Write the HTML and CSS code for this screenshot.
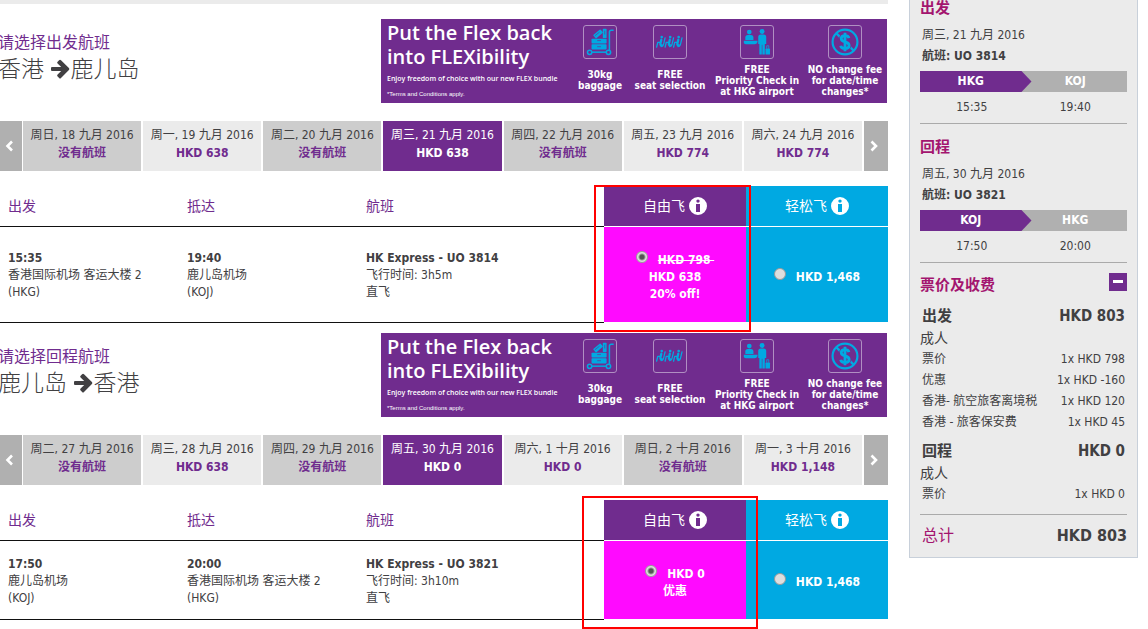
FILE: index.html
```html
<!DOCTYPE html>
<html lang="zh-CN">
<head>
    <meta charset="UTF-8">
    <meta name="viewport" content="width=device-width, initial-scale=1.0">
    <title>HK Express - 选择航班</title>
    <link rel="stylesheet" href="styles.css">
</head>
<body>
    <!-- Shared icons -->
    <svg class="sprite" width="0" height="0" aria-hidden="true">
        <symbol id="icon-arrow" viewBox="0 0 20 20">
            <path d="M1 8h9.200L6.600 4.600a1.300 1.300 0 0 1 0-1.900l1.500-1.500a1.300 1.300 0 0 1 1.900 0l7.900 7.900a1.300 1.300 0 0 1 0 1.900L10 18.900a1.300 1.300 0 0 1-1.900 0l-1.500-1.500a1.300 1.300 0 0 1 0-1.900l3.600-3.400H1a1 1 0 0 1-1-1V9a1 1 0 0 1 1-1z"/>
        </symbol>
        <symbol id="icon-prev" viewBox="0 0 10 12">
            <path d="M7 1.500L2.500 6 7 10.500" fill="none" stroke="#fff" stroke-width="2.600"/>
        </symbol>
        <symbol id="icon-next" viewBox="0 0 10 12">
            <path d="M2.500 1.500L7 6l-4.500 4.500" fill="none" stroke="#fff" stroke-width="2.600"/>
        </symbol>
        <symbol id="icon-info" viewBox="0 0 18 18">
            <path fill-rule="evenodd" d="M9 0a9 9 0 1 1 0 18A9 9 0 0 1 9 0zM9 2.400a1.700 1.700 0 1 0 0 3.400 1.700 1.700 0 0 0 0-3.400zM7 7v8h4V7z"/>
        </symbol>
        <symbol id="icon-baggage" viewBox="0 0 34 34">
            <g fill="#00a9e2">
                <rect x="8" y="19.500" width="16" height="5.500" rx=".8"/>
                <rect x="8" y="13.500" width="16" height="5" rx=".8"/>
                <rect x="20" y="3" width="4" height="9.800" rx=".6"/>
                <rect x="10" y="6" width="10" height="4.800" rx=".8" transform="rotate(-40 15 8.500)"/>
                <rect x="8" y="27" width="16" height="1.600"/>
            </g>
            <g fill="none" stroke="#00a9e2" stroke-width="1.600">
                <circle cx="6" cy="28" r="2.300"/>
                <circle cx="26" cy="28" r="2.300"/>
                <path d="M27 25.500V6.500q0-2 2-2h2.500"/>
            </g>
            <path d="M14 15.500h4M14 22h4M11.500 10.500l5-4M22 5v4" stroke="#702c8e" stroke-width=".7"/>
        </symbol>
        <symbol id="icon-seat" viewBox="0 0 34 34">
            <g id="seat" fill="none" stroke="#00a9e2" stroke-linecap="round" stroke-linejoin="round">
                <circle cx="8.200" cy="11.800" r="1.400" fill="#00a9e2" stroke="none"/>
                <path d="M7.800 14.600l-1 4.200q-.2 1.700 1.600 1.700" stroke-width="2.400"/>
                <path d="M11.800 12.500l-1.600 6.700q-.6 2.600-2.800 2.600" stroke-width="1.300"/>
                <path d="M6.600 17.400H4L2.800 22.500" stroke-width="1.400"/>
            </g>
            <use href="#seat" x="9"/>
            <use href="#seat" x="18"/>
        </symbol>
        <symbol id="icon-checkin" viewBox="0 0 34 34">
            <g fill="#00a9e2">
                <circle cx="8.800" cy="6.500" r="2.500"/>
                <path d="M4.600 14.800v-2.600q0-2.700 2.700-2.700h3.200q2.700 0 2.700 2.700v2.600z"/>
                <path d="M3 15.600h14.500v1.400q-.8 2.400-3 2.400H5.500q-2.200 0-2.500-2z"/>
                <circle cx="22.400" cy="5.800" r="2.600"/>
                <path d="M21 9h3q2.800 0 2.800 2.800V19h-1.500v11.300h-2.600V20h-.6v10.300h-2.600V19h-1.200V11.800Q18.300 9 21 9z"/>
                <rect x="26" y="24" width="4.800" height="6.300" rx=".6"/>
            </g>
            <path d="M27.300 24v-3h2.200v3" fill="none" stroke="#00a9e2" stroke-width=".8"/>
        </symbol>
        <symbol id="icon-nofee" viewBox="0 0 34 34">
            <g fill="none">
                <circle cx="17" cy="17" r="13.200" stroke="#00a9e2" stroke-width="2.300"/>
                <path d="M7.600 7.600l18.800 18.800" stroke="#00a9e2" stroke-width="2.400"/>
                <path d="M21.200 12.800q-.7-2.600-4.200-2.600-4 0-4 3.100 0 2.600 4 3.500 4.400 1 4.400 3.900 0 3.200-4.400 3.200-4 0-4.600-3M17 7.200v19.600" stroke="#702c8e" stroke-width="4.200"/>
                <path d="M21.200 12.800q-.7-2.600-4.200-2.600-4 0-4 3.100 0 2.600 4 3.500 4.400 1 4.400 3.900 0 3.200-4.400 3.200-4 0-4.600-3M17 7.200v19.600" stroke="#00a9e2" stroke-width="3"/>
            </g>
        </symbol>
        <symbol id="icon-minus" viewBox="0 0 18 18">
            <path d="M4 7h10v3H4z" fill="#fff"/>
        </symbol>
    </svg>

    <div class="page">
        <main class="flights">
            <div class="top-bar"></div>

            <section class="leg">
                <div class="leg-header">
                    <div class="leg-title">
                        <h2>请选择出发航班</h2>
                        <h3>香港 <svg class="arrow"><use href="#icon-arrow"/></svg>鹿儿岛</h3>
                    </div>
                    <div class="banner">
                        <div class="banner-text">
                            <p class="banner-title">Put the Flex back<br>into FLEXibility</p>
                            <p class="banner-sub">Enjoy freedom of choice with our new FLEX bundle</p>
                            <p class="banner-terms">*Terms and Conditions apply.</p>
                        </div>
                        <div class="perk"><svg><use href="#icon-baggage"/></svg><p>30kg<br>baggage</p></div>
                        <div class="perk"><svg><use href="#icon-seat"/></svg><p>FREE<br>seat selection</p></div>
                        <div class="perk"><svg><use href="#icon-checkin"/></svg><p>FREE<br>Priority Check in<br>at HKG airport</p></div>
                        <div class="perk"><svg><use href="#icon-nofee"/></svg><p>NO change fee<br>for date/time<br>changes*</p></div>
                    </div>
                </div>

                <div class="dates">
                    <button class="nav prev" aria-label="前一天"><svg><use href="#icon-prev"/></svg></button>
                    <button class="day none">周日, 18 九月 2016<b>没有航班</b></button>
                    <button class="day">周一, 19 九月 2016<b>HKD 638</b></button>
                    <button class="day none">周二, 20 九月 2016<b>没有航班</b></button>
                    <button class="day selected">周三, 21 九月 2016<b>HKD 638</b></button>
                    <button class="day none">周四, 22 九月 2016<b>没有航班</b></button>
                    <button class="day">周五, 23 九月 2016<b>HKD 774</b></button>
                    <button class="day">周六, 24 九月 2016<b>HKD 774</b></button>
                    <button class="nav next" aria-label="后一天"><svg><use href="#icon-next"/></svg></button>
                </div>

                <div class="fares">
                    <table class="fare-table">
                        <thead>
                            <tr>
                                <th class="col-place">出发</th>
                                <th class="col-place">抵达</th>
                                <th>航班</th>
                                <th class="fare flex-head">自由飞 <svg class="info"><use href="#icon-info"/></svg></th>
                                <th class="fare light-head">轻松飞 <svg class="info"><use href="#icon-info"/></svg></th>
                            </tr>
                        </thead>
                        <tbody>
                            <tr class="row-tall">
                                <td><b>15:35</b><br>香港国际机场 客运大楼 2<br>(HKG)</td>
                                <td><b>19:40</b><br>鹿儿岛机场<br>(KOJ)</td>
                                <td><b>HK Express - UO 3814</b><br>飞行时间: 3h5m<br>直飞</td>
                                <td class="fare flex-fare"><input type="radio" name="out" id="out-flex" checked><label for="out-flex"><s>HKD 798&nbsp;</s><br>HKD 638<br>20% off!</label></td>
                                <td class="fare light-fare"><input type="radio" name="out" id="out-light"><label for="out-light">HKD 1,468</label></td>
                            </tr>
                        </tbody>
                    </table>
                    <div class="highlight highlight-out"></div>
                </div>
            </section>

            <section class="leg">
                <div class="leg-header">
                    <div class="leg-title">
                        <h2>请选择回程航班</h2>
                        <h3>鹿儿岛 <svg class="arrow"><use href="#icon-arrow"/></svg>香港</h3>
                    </div>
                    <div class="banner">
                        <div class="banner-text">
                            <p class="banner-title">Put the Flex back<br>into FLEXibility</p>
                            <p class="banner-sub">Enjoy freedom of choice with our new FLEX bundle</p>
                            <p class="banner-terms">*Terms and Conditions apply.</p>
                        </div>
                        <div class="perk"><svg><use href="#icon-baggage"/></svg><p>30kg<br>baggage</p></div>
                        <div class="perk"><svg><use href="#icon-seat"/></svg><p>FREE<br>seat selection</p></div>
                        <div class="perk"><svg><use href="#icon-checkin"/></svg><p>FREE<br>Priority Check in<br>at HKG airport</p></div>
                        <div class="perk"><svg><use href="#icon-nofee"/></svg><p>NO change fee<br>for date/time<br>changes*</p></div>
                    </div>
                </div>

                <div class="dates">
                    <button class="nav prev" aria-label="前一天"><svg><use href="#icon-prev"/></svg></button>
                    <button class="day none">周二, 27 九月 2016<b>没有航班</b></button>
                    <button class="day">周三, 28 九月 2016<b>HKD 638</b></button>
                    <button class="day none">周四, 29 九月 2016<b>没有航班</b></button>
                    <button class="day selected">周五, 30 九月 2016<b>HKD 0</b></button>
                    <button class="day">周六, 1 十月 2016<b>HKD 0</b></button>
                    <button class="day none">周日, 2 十月 2016<b>没有航班</b></button>
                    <button class="day">周一, 3 十月 2016<b>HKD 1,148</b></button>
                    <button class="nav next" aria-label="后一天"><svg><use href="#icon-next"/></svg></button>
                </div>

                <div class="fares">
                    <table class="fare-table">
                        <thead>
                            <tr>
                                <th class="col-place">出发</th>
                                <th class="col-place">抵达</th>
                                <th>航班</th>
                                <th class="fare flex-head">自由飞 <svg class="info"><use href="#icon-info"/></svg></th>
                                <th class="fare light-head">轻松飞 <svg class="info"><use href="#icon-info"/></svg></th>
                            </tr>
                        </thead>
                        <tbody>
                            <tr class="row-short">
                                <td><b>17:50</b><br>鹿儿岛机场<br>(KOJ)</td>
                                <td><b>20:00</b><br>香港国际机场 客运大楼 2<br>(HKG)</td>
                                <td><b>HK Express - UO 3821</b><br>飞行时间: 3h10m<br>直飞</td>
                                <td class="fare flex-fare"><input type="radio" name="back" id="back-flex" checked><label for="back-flex">HKD 0<br>优惠</label></td>
                                <td class="fare light-fare"><input type="radio" name="back" id="back-light"><label for="back-light">HKD 1,468</label></td>
                            </tr>
                        </tbody>
                    </table>
                    <div class="highlight highlight-back"></div>
                </div>
            </section>
        </main>

        <aside class="summary">
            <section class="trip">
                <h4>出发</h4>
                <p>周三, 21 九月 2016</p>
                <p><b>航班: UO 3814</b></p>
                <div class="route"><span class="from">HKG</span><span class="to">KOJ</span></div>
                <div class="times"><span>15:35</span><span>19:40</span></div>
            </section>

            <section class="trip">
                <h4>回程</h4>
                <p>周五, 30 九月 2016</p>
                <p><b>航班: UO 3821</b></p>
                <div class="route"><span class="from">KOJ</span><span class="to">HKG</span></div>
                <div class="times"><span>17:50</span><span>20:00</span></div>
            </section>

            <section class="prices">
                <div class="prices-head">
                    <h4>票价及收费</h4>
                    <button class="toggle" aria-label="收起"><svg><use href="#icon-minus"/></svg></button>
                </div>
                <table class="price-table">
                    <tbody>
                        <tr class="price-leg"><th>出发</th><td>HKD 803</td></tr>
                        <tr class="price-type"><th colspan="2">成人</th></tr>
                        <tr><th>票价</th><td>1x HKD 798</td></tr>
                        <tr><th>优惠</th><td>1x HKD -160</td></tr>
                        <tr><th>香港- 航空旅客离境税</th><td>1x HKD 120</td></tr>
                        <tr><th>香港 - 旅客保安费</th><td>1x HKD 45</td></tr>
                    </tbody>
                </table>
                <table class="price-table">
                    <tbody>
                        <tr class="price-leg"><th>回程</th><td>HKD 0</td></tr>
                        <tr class="price-type"><th colspan="2">成人</th></tr>
                        <tr><th>票价</th><td>1x HKD 0</td></tr>
                    </tbody>
                </table>
            </section>

            <div class="total"><span>总计</span><b>HKD 803</b></div>
        </aside>
    </div>
</body>
</html>
```
FILE: styles.css
```css
* {
    box-sizing: border-box;
}
body {
    margin: 0;
    background-color: #fff;
    color: #414042;
    font-family: "DejaVu Sans Condensed", "Noto Sans CJK SC", sans-serif;
    font-size: 12px;
    line-height: 17px;
}
h2, h3, h4, p {
    margin: 0;
    font-weight: normal;
}
button {
    border: 0;
    padding: 0;
    font: inherit;
    color: inherit;
    cursor: pointer;
}
.sprite {
    position: absolute;
}
.page {
    display: grid;
    grid-template-columns: minmax(0, 1fr) 229px;
    align-items: start;
    gap: 21px;
    padding: 0 10px 9px 0;
}

/* Flight selection */
.top-bar {
    height: 4px;
    margin-bottom: 5px;
    background-color: #ebebeb;
}
.leg {
    padding-top: 10px;
}
.leg-header {
    display: flex;
    justify-content: space-between;
    margin-bottom: 18px;
    padding-right: 1px;
}
.leg-title {
    margin-left: -2px;
    padding-top: 14px;
}
.leg-title h2 {
    font-size: 16px;
    line-height: 20px;
    color: #702c8e;
}
.leg-title h3 {
    font-size: 23px;
    line-height: 32px;
    font-weight: 300;
}
.arrow {
    width: 20px;
    height: 20px;
    vertical-align: -2px;
    fill: #414042;
}

/* Flex banner */
.banner {
    display: grid;
    grid-template-columns: 184px 70px 70px 104px 72px;
    width: 506px;
    height: 84px;
    background-color: #702c8e;
    color: #fff;
    white-space: nowrap;
}
.banner-text {
    padding: 2px 0 0 6px;
}
.banner-title {
    font-family: "Open Sans", sans-serif;
    font-size: 20px;
    line-height: 24px;
    font-weight: 600;
}
.banner-sub {
    margin-top: 4px;
    font-family: "Open Sans", sans-serif;
    font-size: 7px;
    line-height: 12px;
    font-weight: 600;
}
.banner-terms {
    margin-top: 4px;
    font-family: "Liberation Sans", Arial, sans-serif;
    font-size: 6px;
    line-height: 10px;
}
.perk {
    display: flex;
    flex-direction: column;
    align-items: center;
    padding-top: 6px;
}
.perk svg {
    flex: none;
    width: 34px;
    height: 34px;
    border: 1px solid #b08fc2;
    border-radius: 3px;
}
.perk p {
    display: flex;
    align-items: center;
    height: 42px;
    font-size: 10px;
    line-height: 11px;
    font-weight: bold;
    text-align: center;
}

/* Date strip */
.dates {
    display: flex;
    gap: 2px;
    height: 50px;
    margin-bottom: 15px;
}
.nav {
    flex: none;
    display: flex;
    align-items: center;
    justify-content: center;
    width: 24px;
    padding-right: 3px;
    background-color: #b0b0b0;
}
.nav.prev {
    width: 22px;
    margin-right: -1px;
}
.nav svg {
    width: 10px;
    height: 12px;
}
.day {
    flex: 1 1 0;
    padding-bottom: 4px;
    background-color: #ebebeb;
    line-height: 18px;
    white-space: nowrap;
}
.day b {
    display: block;
    color: #702c8e;
}
.day.none {
    background-color: #cdcdcd;
}
.day.selected,
.day.selected b {
    background-color: #702c8e;
    color: #fff;
}

/* Fares */
.fares {
    position: relative;
}
.fare-table {
    width: 100%;
    table-layout: fixed;
    border-collapse: separate;
    border-spacing: 0;
}
.fare-table th,
.fare-table td {
    padding: 0 8px;
    border-bottom: 1px solid #111;
    text-align: left;
}
.fare-table th {
    height: 41px;
    font-size: 14px;
    font-weight: normal;
    color: #702c8e;
}
.fare-table td {
    padding-top: 2px;
}
.col-place {
    width: 179px;
}
.row-tall td {
    height: 96px;
}
.row-short td {
    height: 79px;
}
.fare-table .fare {
    width: 142px;
    border-bottom-color: #fff;
    color: #fff;
    text-align: center;
}
.fare-table td.fare {
    padding-top: 4px;
    font-weight: bold;
}
.flex-head {
    background-color: #702c8e;
}
.light-head,
.light-fare {
    background-color: #00a9e2;
}
.flex-fare {
    background-color: #ff0aff;
}
.info {
    width: 18px;
    height: 18px;
    vertical-align: -4px;
    fill: #fff;
}
.fare input {
    appearance: none;
    width: 12px;
    height: 12px;
    margin: 0 10px 0 0;
    border: 1px solid #999;
    border-radius: 50%;
    background-color: #dedede;
    vertical-align: 1px;
}
.fare input:checked {
    background-image: radial-gradient(circle, #555 0 2px, #dedede 4px);
}
.highlight {
    position: absolute;
    border: 2px solid #f00;
    pointer-events: none;
}
.highlight-out {
    top: -1px;
    right: 137px;
    width: 157px;
    height: 147px;
}
.highlight-back {
    top: -4px;
    right: 130px;
    width: 176px;
    height: 133px;
}

/* Booking summary */
.summary {
    margin-top: -16px;
    padding: 0 10px;
    border: 1px solid #c8d0da;
    background-color: #ebebeb;
}
.summary h4 {
    font-size: 15px;
    line-height: 20px;
    font-weight: bold;
    color: #a3156f;
}
.trip {
    padding: 13px 0 5px;
    border-bottom: 1px solid #aaa;
}
.trip h4 {
    margin-bottom: 7px;
}
.trip p {
    padding-left: 2px;
    line-height: 21px;
}
.route,
.times {
    display: grid;
    grid-template-columns: 1fr 1fr;
    margin-top: 4px;
    line-height: 21px;
    text-align: center;
}
.times {
    margin-top: 5px;
}
.route {
    background-color: #b0b0b0;
    color: #fff;
    font-weight: bold;
}
.route .from {
    margin-right: -8px;
    padding-right: 10px;
    background-color: #702c8e;
    clip-path: polygon(0 0, calc(100% - 10px) 0, 100% 50%, calc(100% - 10px) 100%, 0 100%);
}
.prices {
    padding: 10px 0 9px;
    border-bottom: 1px solid #aaa;
}
.prices-head {
    display: flex;
    justify-content: space-between;
    align-items: flex-start;
}
.prices-head h4 {
    line-height: 25px;
}
.toggle {
    width: 18px;
    height: 18px;
    background-color: #702c8e;
}
.toggle svg {
    display: block;
    width: 18px;
    height: 18px;
}
.price-table {
    width: 100%;
    margin-top: 7px;
    border-collapse: collapse;
    white-space: nowrap;
}
.price-table th,
.price-table td {
    height: 21px;
    padding: 0 2px;
    font-weight: normal;
    line-height: 21px;
    text-align: left;
}
.price-table td {
    text-align: right;
}
.price-table .price-leg th,
.price-table .price-leg td {
    height: 23px;
    font-size: 15px;
    line-height: 23px;
    font-weight: bold;
}
.price-table .price-type th {
    padding: 0;
    font-size: 14px;
}
.total {
    display: flex;
    justify-content: space-between;
    padding-left: 2px;
    font-size: 16px;
    line-height: 42px;
}
.total span {
    color: #a3156f;
}
```
